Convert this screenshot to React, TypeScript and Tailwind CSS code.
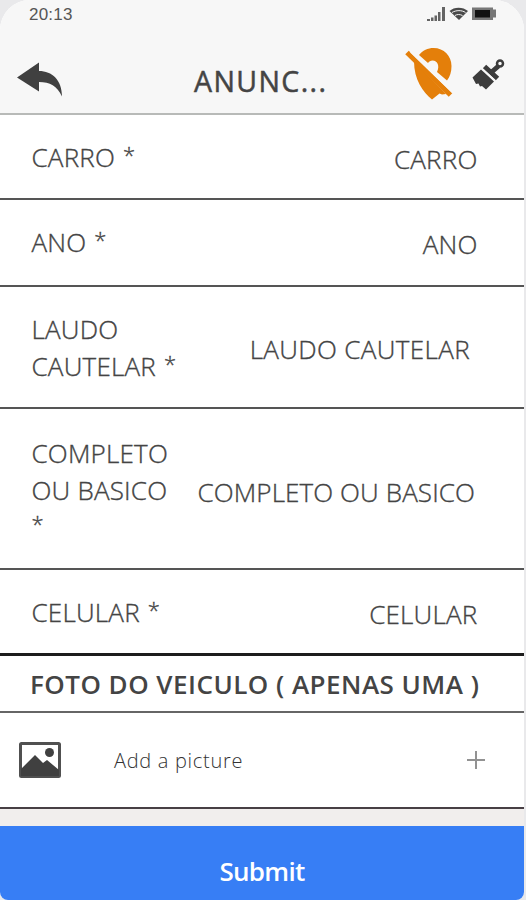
import React from 'react';
import { twMerge } from 'tailwind-merge';

interface FieldRowProps {
    label: string[];
    value: string;
    className?: string;
    valueClassName?: string;
}

function FieldRow({ label, value, className, valueClassName }: FieldRowProps) {
    return (
        <div className={twMerge("flex items-start justify-between border-b-2 border-[#555] pl-[31.500px] pr-[46.500px] text-[26px] font-light leading-[36.500px] tracking-[0.2px] text-[#444] whitespace-nowrap [-webkit-text-stroke:0.35px_#444]", className)}>
            <label>
                {label.map((line, i) => (
                    <span key={line} className="block h-[36.500px]">
                        {line}
                        {/* required marker sits on the last line */}
                        {i === label.length - 1 && (
                            <span className={twMerge("inline-block -translate-y-1 text-[22px]", line && "ml-2")}>*</span>
                        )}
                    </span>
                ))}
            </label>
            <span className={twMerge("mt-0.5", valueClassName)}>{value}</span>
        </div>
    );
}

function StatusIcons() {
    return (
        <svg width="72" height="16" viewBox="0 0 72 16" fill="#4a4a4a">
            {/* signal */}
            <path d="M1 13h3v2H1zM5 11.500h2.500v3.500H5zM8.500 9.500h2.500v5.500H8.500zM12 6h2.500v9H12zM16 1h3v14h-3z" opacity=".85" />
            {/* wifi */}
            <path d="M23.500 5C28 0.500 37 0.500 42 5L33 14z" />
            <path d="M26 6.500C30 4 36 4 39.500 6.500M29 9.500c2-1.300 5-1.300 7.500 0" fill="none" stroke="#f7f7f7" strokeWidth="1" />
            {/* battery */}
            <path d="M46 1.500h21v2h3v8h-3v2.500H46z" fill="#777" />
            <path d="M49 4h15v7.500H49z" fill="#111" />
        </svg>
    );
}

export default function App() {
    return (
        <div className="h-[900px] w-[526px] overflow-hidden bg-[#e9e9eb] font-['Open_Sans','Noto_Sans',sans-serif]">
            <div className="flex h-[900px] w-[524px] flex-col overflow-hidden rounded-t-[30px] rounded-b-[8px] bg-white">
                {/* Header */}
                <header className="h-[115px] border-b-2 border-[#b8bab8] bg-[#f7f7f7]">
                    <div className="flex h-[30px] items-start justify-between pl-[29px] pr-[26px] pt-[6px]">
                        <span className="font-['Liberation_Sans',sans-serif] text-[17px] leading-[17px] tracking-[0.2px] text-[#555]">20:13</span>
                        <StatusIcons />
                    </div>
                    <div className="flex h-[83px] items-start pl-[17px]">
                        <svg className="mt-[32px]" width="46" height="36" viewBox="0 0 46 36" fill="#404040">
                            <path d="M0 15.500L22 0.500v8.500c13 0 23 9 23 25.500C40 24 33 20 22 20v9.500z" />
                        </svg>
                        <h1 className="ml-[131px] mt-[32px] w-[134px] whitespace-nowrap text-[28.500px] font-normal leading-[38px] tracking-[1.4px] text-[#444] [-webkit-text-stroke:0.5px_#444]">ANUNC...</h1>
                        {/* location off */}
                        <svg className="ml-[77px] mt-[16px]" width="50" height="54" viewBox="0 0 50 54">
                            <path fill="#e47f0a" d="M28.500 2C39 2 46.500 10 46.500 20C46.500 26 45 30.500 42 34.500L32 26C35 20 32.500 14.500 27.500 14.500C25.500 14.500 24 15.500 23 17L14 9C17.500 4.500 23 2 28.500 2z" />
                            <path d="M9 15L41 48l-4 0.500-2.500-1-7.500 6C18 46 9 34 9 15z" fill="#e47f0a" />
                            <path d="M2 6.500L45.500 49" stroke="#e47f0a" strokeWidth="5" />
                            <path d="M6 5.500L48 46" stroke="#f7f7f7" strokeWidth="2.500" />
                        </svg>
                        {/* brush */}
                        <svg className="ml-[17px] mt-[28px]" width="34" height="34" viewBox="0 0 34 34">
                            <path d="M0.500 19.500L9 11.500 22 23.500 14 31.500l-4-3.500-2 0.500-1.500-3-2.500 0.500z" fill="#3c3c3c" />
                            <path d="M12.500 8.500L25.500 20.500M18 15.500l8.500-7.500" stroke="#3c3c3c" strokeWidth="5" />
                            <path d="M10 10.500L23 22.500" stroke="#f7f7f7" strokeWidth="1.500" />
                            <circle cx="28" cy="5.500" r="3" fill="none" stroke="#3c3c3c" strokeWidth="2.500" />
                        </svg>
                    </div>
                </header>

                {/* Form fields */}
                <FieldRow label={["CARRO"]} value="CARRO" className="h-[85px] pt-[24px]" />
                <FieldRow label={["ANO"]} value="ANO" className="h-[87px] pt-[24px]" />
                <FieldRow label={["LAUDO", "CAUTELAR"]} value="LAUDO CAUTELAR" className="h-[121.500px] pt-[24px] pr-[54px]" valueClassName="mt-5 tracking-[0.35px]" />
                <FieldRow label={["COMPLETO", "OU BASICO", ""]} value="COMPLETO OU BASICO" className="h-[161.500px] pt-[26.500px] pr-[49px]" valueClassName="mt-[39px] tracking-[0.1px]" />
                <FieldRow label={["CELULAR"]} value="CELULAR" className="h-[86px] border-b-3 border-[#1c1c1c] pt-[24px]" />

                <h2 className="h-[57px] whitespace-nowrap border-b-2 border-[#666] pl-[30px] pt-[10px] text-[26px] font-semibold leading-[36px] tracking-[0.480px] text-[#444]">
                    FOTO DO VEICULO ( APENAS UMA )
                </h2>

                {/* Picture picker */}
                <div className="flex h-[96px] items-center border-b-2 border-[#473f44] pl-[19px] pr-[39px]">
                    <svg width="42" height="36" viewBox="0 0 42 36">
                        <rect x="1.500" y="1.500" width="39" height="33" rx="1" fill="white" stroke="#505050" strokeWidth="3" />
                        <path d="M2 27L16 13l8 8 4-3 12 10v6H2z" fill="#404040" />
                        <circle cx="30.500" cy="10.500" r="4.500" fill="#404040" />
                    </svg>
                    <span className="ml-[53px] mt-0.5 text-[20px] font-light tracking-[0.7px] text-[#333]">Add a picture</span>
                    <svg className="ml-auto" width="18" height="18" viewBox="0 0 18 18" stroke="#929292" strokeWidth="2">
                        <path d="M9 0v18M0 9h18" />
                    </svg>
                </div>

                <div className="h-[17px] bg-[#f1eeed]" />
                <button className="h-[74px] bg-[#377ef5] pt-[16px] text-[26px] font-semibold leading-[36px] tracking-[-0.7px] text-white">Submit</button>
            </div>
        </div>
    );
}
